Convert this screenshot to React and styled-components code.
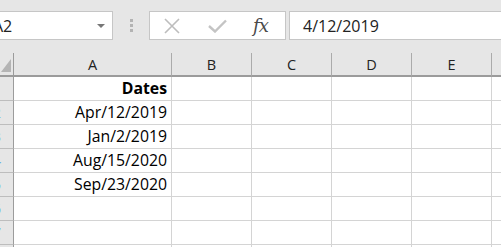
import React from 'react';
import styled, { createGlobalStyle } from 'styled-components';

const Global = createGlobalStyle`
  body {
    margin: 0;
    background: #e6e6e6;
    font-family: "Open Sans", "Liberation Sans", sans-serif;
    overflow: hidden;
  }
`

const Page = styled.div`
  width: 501px;
  height: 247px;
  overflow: hidden;
  background: #e6e6e6;
`

const FormulaRow = styled.div`
  display: flex;
  align-items: center;
  height: 29px;
  padding-top: 11px;
  padding-bottom: 13px;
`

const NameBox = styled.div`
  display: flex;
  align-items: center;
  justify-content: space-between;
  box-sizing: border-box;
  width: 125px;
  height: 29px;
  margin-left: -12px;
  padding: 0 7px 0 4px;
  background: #fff;
  border: 1px solid #c6c6c6;
  font-size: 16px;
  color: #222;
`

const Arrow = styled.span`
  width: 0;
  height: 0;
  border-left: 4px solid transparent;
  border-right: 4px solid transparent;
  border-top: 4px solid #777;
`

const Grip = styled.div`
  display: flex;
  flex-direction: column;
  gap: 2px;
  margin: 0 16px 0 17px;
  span {
    width: 3px;
    height: 3px;
    background: #b3b3b3;
  }
`

const Buttons = styled.div`
  display: flex;
  align-items: center;
  box-sizing: border-box;
  width: 137px;
  height: 29px;
  background: #fff;
  border: 1px solid #c6c6c6;
  padding-left: 14px;
`

const Fx = styled.span`
  font-family: "DejaVu Serif", "Liberation Serif", serif;
  font-style: italic;
  font-size: 18px;
  color: #4a4a4a;
  margin-left: 26px;
  letter-spacing: -1px;
`

const FormulaInput = styled.div`
  display: flex;
  align-items: center;
  box-sizing: border-box;
  flex: 1;
  height: 29px;
  margin-left: 3px;
  margin-right: -20px;
  padding-left: 13px;
  background: #fff;
  border: 1px solid #c6c6c6;
  font-size: 16px;
  color: #222;
`

const Sheet = styled.div`
  display: grid;
  grid-template-columns: 14px 158px repeat(5, 80px);
  grid-auto-rows: 24px;
`

const ColHead = styled.div`
  box-sizing: border-box;
  border-right: 1px solid #ababab;
  border-bottom: 2px solid #9b9b9b;
  background: #e6e6e6;
  text-align: center;
  font-size: 14.5px;
  line-height: 23px;
  color: #222;
`

const Corner = styled(ColHead)`
  display: flex;
  align-items: flex-end;
  padding: 0 0 3px 1px;
  border-right-color: #9b9b9b;
  &::before {
    content: '';
    width: 10px;
    height: 13px;
    background: #b4b4b4;
    clip-path: polygon(100% 0, 100% 100%, 0 100%);
  }
`

const RowHead = styled.div`
  box-sizing: border-box;
  overflow: hidden;
  border-right: 1px solid #9c9c9c;
  border-bottom: 1px solid #bdbdbd;
  background: #e6e6e6;
  font-size: 15px;
  line-height: 23px;
  color: #6cb4e8;
  white-space: nowrap;
  span {
    margin-left: -7.5px;
  }
`

const Cell = styled.div`
  box-sizing: border-box;
  border-right: 1px solid #d4d4d4;
  border-bottom: 1px solid #d4d4d4;
  background: #fff;
  padding-right: 4px;
  text-align: right;
  font-size: 15.8px;
  font-weight: ${props => props.bold ? 700 : 400};
  line-height: 23px;
  color: #000;
  white-space: nowrap;
`

const cols = ['A', 'B', 'C', 'D', 'E', 'F'];
const dates = ['Apr/12/2019', 'Jan/2/2019', 'Aug/15/2020', 'Sep/23/2020'];
const rows = [{ text: 'Dates', bold: true }, ...dates.map(d => ({ text: d })), {}, {}, {}];

function App() {
    return (
        <Page>
            <Global />
            <FormulaRow>
                <NameBox>
                    A2
                    <Arrow />
                </NameBox>
                <Grip><span /><span /><span /></Grip>
                <Buttons>
                    <svg width="16" height="16" viewBox="0 0 16 16">
                        <path d="M1 1 L15 15 M15 1 L1 15" stroke="#bdbdbd" strokeWidth="1.6" fill="none" />
                    </svg>
                    <svg width="19" height="14" viewBox="0 0 19 14" style={{ marginLeft: 28 }}>
                        <path d="M1 7 L7 12.5 L18 1.5" stroke="#c4c4c4" strokeWidth="2.4" fill="none" />
                    </svg>
                    <Fx>fx</Fx>
                </Buttons>
                <FormulaInput>4/12/2019</FormulaInput>
            </FormulaRow>
            <Sheet>
                <Corner />
                {cols.map(c => <ColHead key={c}>{c === 'F' ? '' : c}</ColHead>)}
                {rows.map((r, i) => (
                    <React.Fragment key={i}>
                        <RowHead><span>{i + 1}</span></RowHead>
                        <Cell bold={r.bold}>{r.text}</Cell>
                        {cols.slice(1).map(c => <Cell key={c} />)}
                    </React.Fragment>
                ))}
            </Sheet>
        </Page>
    )
}

export default App;
